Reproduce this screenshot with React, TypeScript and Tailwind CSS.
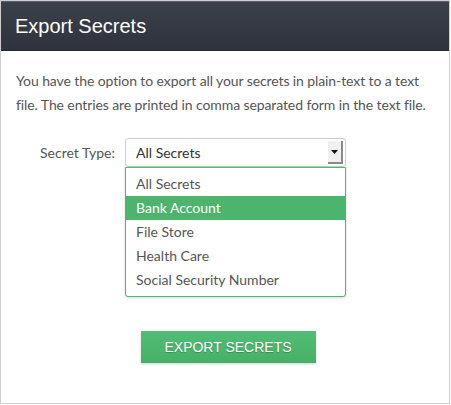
const OPTIONS = ["All Secrets", "Bank Account", "File Store", "Health Care", "Social Security Number"];

export default function App() {
  const selected = "Bank Account";

  return (
    <div className="h-[405px] w-[451px] bg-white">
      <div className="flex h-[404px] w-[450px] flex-col border border-[#cfcfcf] bg-white">
        <div className="flex h-[50px] items-center border-t border-t-[#5b6069] border-b border-b-[#23272e] bg-gradient-to-b from-[#3b414c] to-[#2e333c] pl-[14px]">
          <h2 className="font-['Liberation_Sans',Arial,sans-serif] text-[20px] text-white">Export Secrets</h2>
        </div>

        <div className="px-[15px] pt-[18px] font-['Lato',sans-serif] text-[14px] leading-[24px] text-[#555]">
          <p className="tracking-[-0.1px]">
            You have the option to export all your secrets in plain-text to a text
            <br />
            file. The entries are printed in comma separated form in the text file.
          </p>

          <div className="mt-[21px] flex items-start">
            <label className="w-[99px] pt-[3px] text-right text-[#555]">Secret Type:</label>
            <div className="ml-[10px] w-[221px]">
              <div className="flex h-[29px] items-center justify-between rounded-[3px] border border-[#cccccc] bg-white pl-[10px] pr-[2px] text-[#333]">
                <span>All Secrets</span>
                <span className="flex h-[23px] w-[15px] items-center justify-center border-b-2 border-r-2 border-b-[#8a8a8a] border-r-[#8a8a8a] bg-[#f0f0f0]">
                  <svg width="7" height="4" viewBox="0 0 7 4">
                    <path d="M0 0h7L3.5 4z" fill="#111" />
                  </svg>
                </span>
              </div>
              <ul className="rounded-b-[3px] border border-[#4cb86b] bg-white py-[4px] text-[#555] shadow-[0_1px_3px_rgba(0,0,0,0.15)]">
                {OPTIONS.map((o) => (
                  <li
                    key={o}
                    className={
                      o === selected
                        ? "h-[24px] bg-[#4cb46c] pl-[10px] leading-[24px] text-white"
                        : "h-[24px] pl-[10px] leading-[24px]"
                    }
                  >
                    {o}
                  </li>
                ))}
              </ul>
            </div>
          </div>

          <div className="mt-[34px] flex justify-center pl-[6px]">
            <button className="h-[32px] w-[175px] bg-gradient-to-b from-[#52bd74] to-[#47b068] font-['Liberation_Sans',Arial,sans-serif] text-[14px] text-white shadow-[0_1px_2px_rgba(0,0,0,0.2)] [text-shadow:0_1px_1px_rgba(0,0,0,0.25)]">
              EXPORT SECRETS
            </button>
          </div>
        </div>
      </div>
    </div>
  );
}
